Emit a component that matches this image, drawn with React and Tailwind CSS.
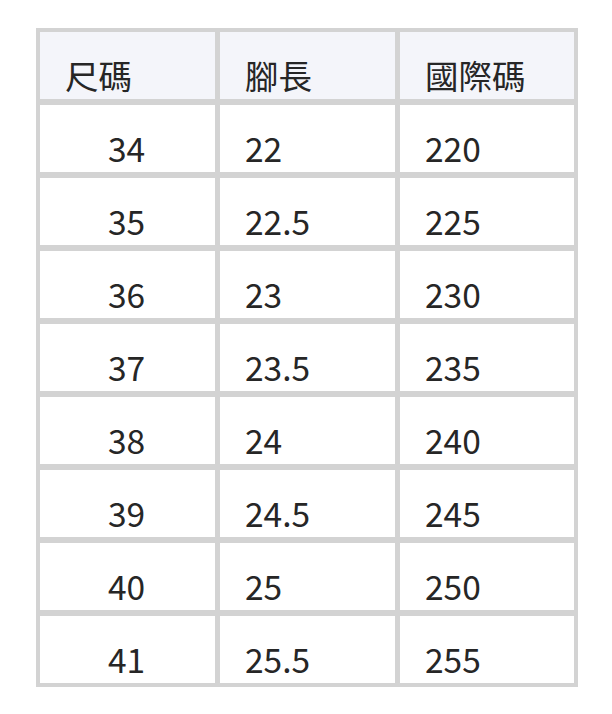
import React from "react";

const rows = [
  ["34", "22", "220"],
  ["35", "22.5", "225"],
  ["36", "23", "230"],
  ["37", "23.5", "235"],
  ["38", "24", "240"],
  ["39", "24.5", "245"],
  ["40", "25", "250"],
  ["41", "25.5", "255"],
];

const font = {
  fontFamily: '"Noto Sans CJK TC", "Noto Sans", sans-serif',
};

export default function App() {
  return (
    <div className="min-h-screen bg-white pt-[28px] pl-[36px]" style={font}>
      <div className="w-[542px] bg-[#d3d3d3] p-[4px] grid grid-cols-[175px_175px_174px] gap-x-[5px] gap-y-[6px] text-[#262626] text-[33.5px]">
        <div className="h-[67px] bg-[#f4f5fa] flex items-end pl-[25px] pb-[2px] leading-[44px]">尺碼</div>
        <div className="h-[67px] bg-[#f4f5fa] flex items-end pl-[25px] pb-[2px] leading-[44px]">腳長</div>
        <div className="h-[67px] bg-[#f4f5fa] flex items-end pl-[25px] pb-[2px] leading-[44px]">國際碼</div>
        {rows.map((row, i) => (
          <React.Fragment key={i}>
            <div className="h-[67px] bg-white flex items-end justify-center pb-[2px] pr-[2px] leading-[44px]">{row[0]}</div>
            <div className="h-[67px] bg-white flex items-end pl-[25px] pb-[2px] leading-[44px]">{row[1]}</div>
            <div className="h-[67px] bg-white flex items-end pl-[25px] pb-[2px] leading-[44px]">{row[2]}</div>
          </React.Fragment>
        ))}
      </div>
    </div>
  );
}
